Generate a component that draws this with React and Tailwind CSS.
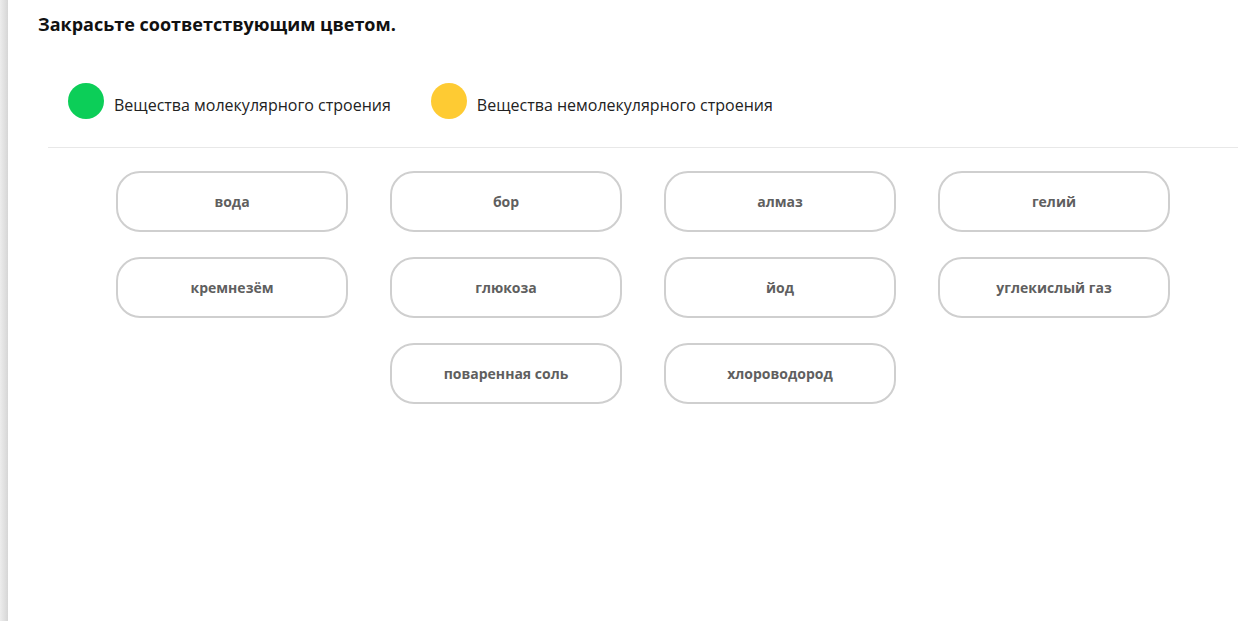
const ITEMS = [
  'вода',
  'бор',
  'алмаз',
  'гелий',
  'кремнезём',
  'глюкоза',
  'йод',
  'углекислый газ',
  'поваренная соль',
  'хлороводород',
]

function Legend({ color, label }) {
  return (
    <div className="flex items-center gap-[10px]">
      <span className={`h-[36px] w-[36px] rounded-full ${color}`} />
      <span className="pt-[7px] text-[16px] text-[#222]">{label}</span>
    </div>
  )
}

export default function App() {
  return (
    <div className="flex h-[621px] w-full bg-white font-['Open_Sans',sans-serif]">
      <div className="w-[8px] shrink-0 bg-gradient-to-r from-[#ededed] to-[#d6d6d6]" />
      <main className="flex-1 pr-[19px]">
        <h1 className="pl-[30px] pt-[12px] text-[18px] font-bold leading-[25px] text-[#111]">
          Закрасьте соответствующим цветом.
        </h1>
        <div className="mt-[46px] flex items-center gap-[40px] pl-[60px]">
          <Legend color="bg-[#0cce58]" label="Вещества молекулярного строения" />
          <Legend color="bg-[#fecb33]" label="Вещества немолекулярного строения" />
        </div>
        <div className="ml-[40px] mt-[28px] border-t border-[#e8e8e8]" />
        <div className="ml-[40px] mt-[23px] flex flex-wrap justify-center gap-x-[42px] gap-y-[25px] px-[68px]">
          {ITEMS.map((t) => (
            <button
              key={t}
              className="flex h-[61px] w-[232px] items-center justify-center rounded-[24px] border-2 border-[#cfcfcf] bg-white text-[14px] font-bold text-[#5f5f5f]"
            >
              {t}
            </button>
          ))}
        </div>
      </main>
    </div>
  )
}
